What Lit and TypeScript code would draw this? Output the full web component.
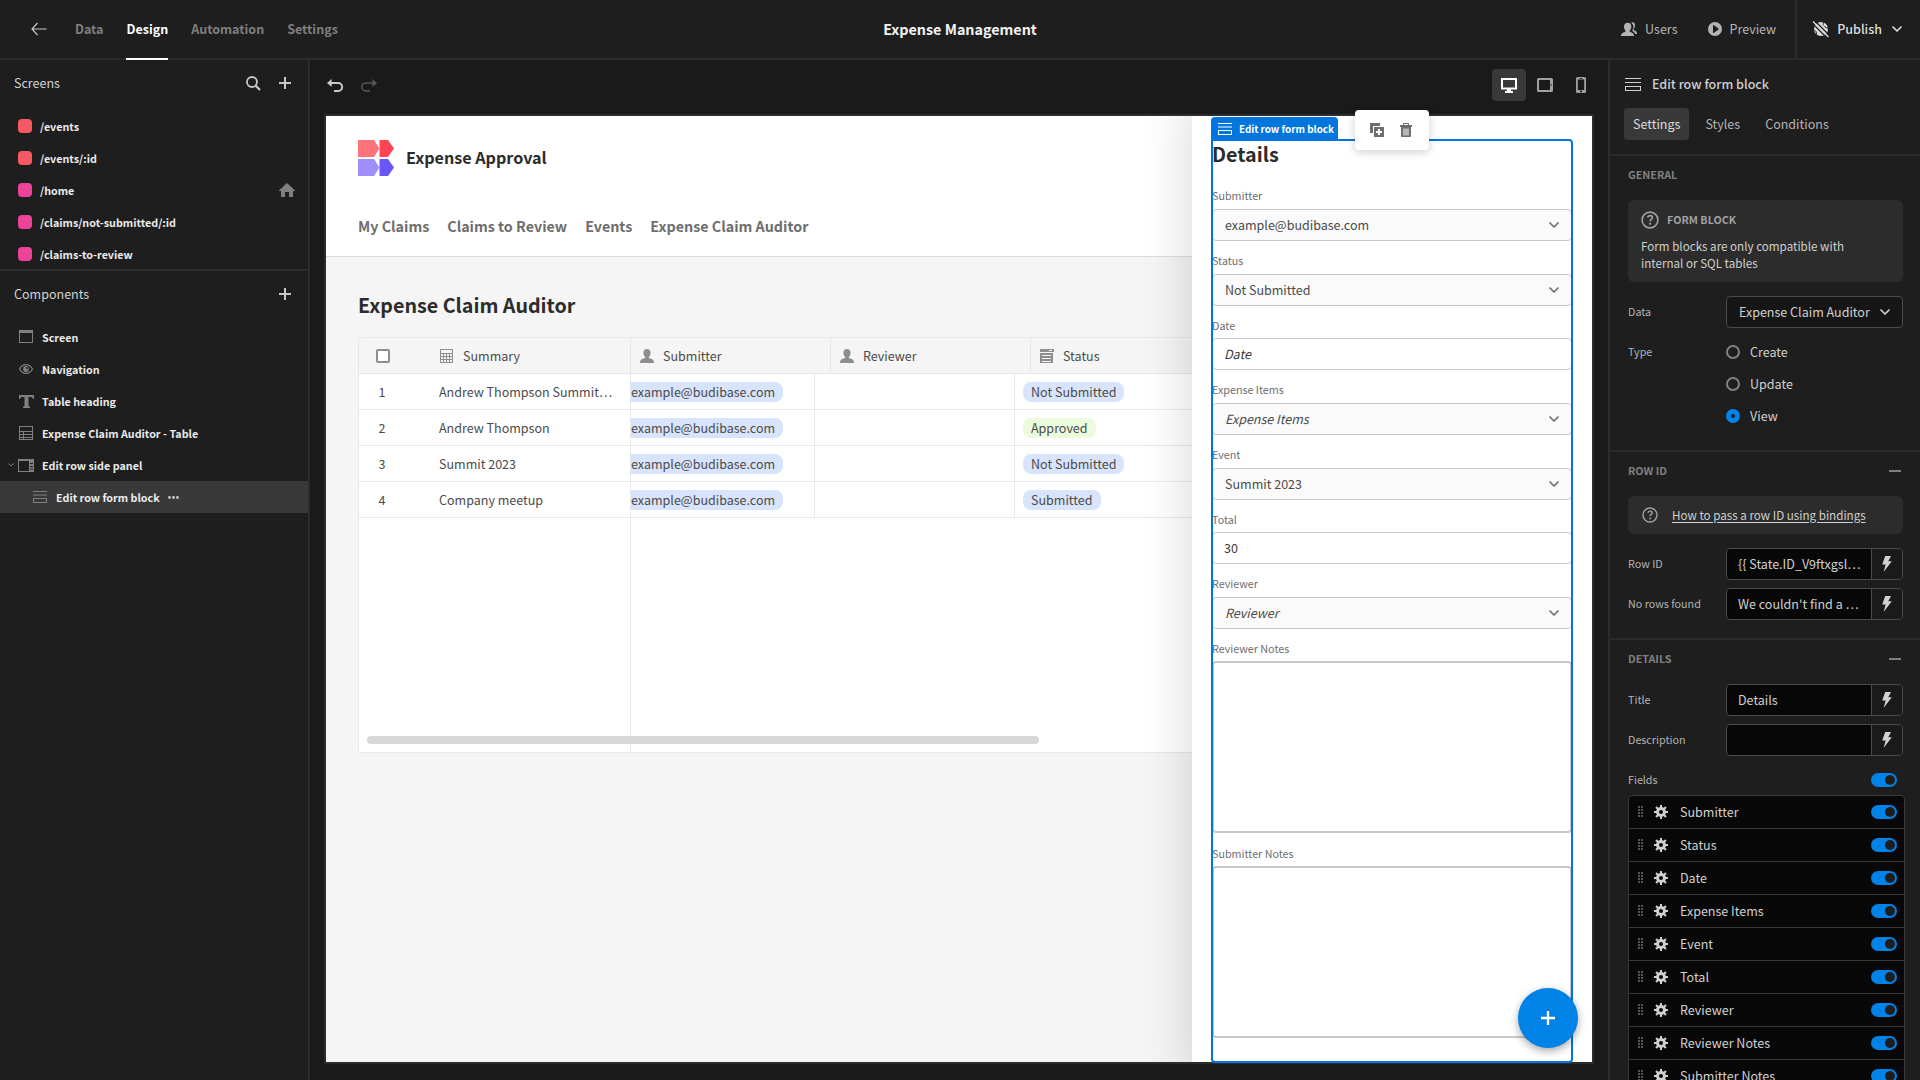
import { LitElement, html, svg, css, nothing, type TemplateResult } from "lit";
import { customElement, property, state } from "lit/decorators.js";
import { classMap } from "lit/directives/class-map.js";

type Icon = { w: number; h: number; body: TemplateResult };

const ICONS: Record<string, Icon> = {
  back: { w: 16, h: 14, body: svg`<path d="M15.500 7H1M6.500 1 1 7l5.500 6" fill="none" stroke="currentColor" stroke-width="1.200"/>` },
  search: { w: 15, h: 15, body: svg`<circle cx="6" cy="6" r="5" fill="none" stroke="currentColor" stroke-width="1.800"/><path d="m9.600 9.600 4.400 4.400" stroke="currentColor" stroke-width="2.200"/>` },
  plus: { w: 12, h: 12, body: svg`<path d="M0 6h12M6 0v12" stroke="currentColor" stroke-width="2"/>` },
  home: { w: 16, h: 14, body: svg`<path d="M8 0 .2 7.300c-.3.300-.1.700.300.700H2v5.500c0 .300.200.500.500.500H6V9h4v5h3.500c.300 0 .5-.2.500-.5V8h1.500c.400 0 .6-.4.300-.7z" fill="currentColor"/>` },
  screen: { w: 14, h: 14, body: svg`<path d="M0 0h14v3H0z" fill="currentColor"/><rect x=".5" y=".5" width="13" height="12" fill="none" stroke="currentColor"/>` },
  eye: { w: 14, h: 10, body: svg`<path d="M.5 5C2 2 4.300.6 7 .6S12 2 13.500 5C12 8 9.700 9.400 7 9.400S2 8 .5 5z" fill="none" stroke="currentColor" stroke-width="1.200"/><circle cx="7" cy="5" r="2.900" fill="currentColor"/><circle cx="8" cy="4" r="1" fill="#1e1e1e"/>` },
  text: { w: 15, h: 13, body: svg`<path d="M0 0h15v4h-1.200c-.2-1.400-.7-2-2-2H9.500v8.500c0 .8.500 1 1.500 1.200V13H4v-1.300c1-.2 1.500-.4 1.500-1.200V2H3.200c-1.300 0-1.800.6-2 2H0z" fill="currentColor"/>` },
  table: { w: 14, h: 14, body: svg`<rect x=".5" y=".5" width="13" height="13" fill="none" stroke="currentColor"/><path d="M0 5.500h14M0 8.500h14M0 11.500h14M4.500 5v9" stroke="currentColor"/>` },
  sidepanel: { w: 16, h: 13, body: svg`<path d="M0 0h16v2H0zM11 0h5v13h-5z" fill="currentColor"/><rect x=".5" y=".5" width="15" height="12" fill="none" stroke="currentColor"/><path d="M12 4.500h3M12 7.500h3M12 10h3" stroke="#1e1e1e"/>` },
  form: { w: 16, h: 13, body: svg`<path d="M0 .5h16M0 4.500h16" stroke="currentColor"/><rect x=".5" y="8.500" width="15" height="4" fill="none" stroke="currentColor"/>` },
  formsmall: { w: 14, h: 12, body: svg`<path d="M0 .5h14M0 4h14" stroke="currentColor"/><rect x=".5" y="7.500" width="13" height="4" fill="none" stroke="currentColor"/>` },
  caret: { w: 6, h: 4, body: svg`<path d="m.5.500 2.500 2.500L5.500.5" fill="none" stroke="currentColor"/>` },
  dots: { w: 11, h: 3, body: svg`<circle cx="1.500" cy="1.500" r="1.400" fill="currentColor"/><circle cx="5.500" cy="1.500" r="1.400" fill="currentColor"/><circle cx="9.500" cy="1.500" r="1.400" fill="currentColor"/>` },
  chevron: { w: 10, h: 6, body: svg`<path d="m1 1 4 4 4-4" fill="none" stroke="currentColor" stroke-width="1.700" stroke-linecap="round" stroke-linejoin="round"/>` },
  undo: { w: 16, h: 13, body: svg`<path d="M4 4h7.200a3.800 3.800 0 0 1 0 7.900H7" fill="none" stroke="currentColor" stroke-width="2"/><path d="M0 4 4.600 0v8z" fill="currentColor"/>` },
  redo: { w: 16, h: 13, body: svg`<path d="M12 4H4.800a3.800 3.800 0 0 0 0 7.900H9" fill="none" stroke="currentColor" stroke-width="1.600"/><path d="m16 4-4.600-4v8z" fill="currentColor"/>` },
  desktop: { w: 16, h: 15, body: svg`<rect x="1" y="1" width="14" height="9.500" fill="none" stroke="currentColor" stroke-width="2"/><path d="M6 11h4v2h1.500c.300 0 .5.200.5.500V15H4v-1.500c0-.3.200-.5.500-.5H6z" fill="currentColor"/>` },
  tablet: { w: 16, h: 14, body: svg`<path d="M1.500 0h13A1.500 1.500 0 0 1 16 1.500v11a1.500 1.500 0 0 1-1.500 1.500h-13A1.500 1.500 0 0 1 0 12.500v-11A1.500 1.500 0 0 1 1.500 0zM2 2v10h11V2zm12.500 4a.8.8 0 0 0 0 2z" fill="currentColor" fill-rule="evenodd"/>` },
  phone: { w: 10, h: 16, body: svg`<path d="M1.500 0h7A1.500 1.500 0 0 1 10 1.500v13A1.500 1.500 0 0 1 8.500 16h-7A1.500 1.500 0 0 1 0 14.500v-13A1.500 1.500 0 0 1 1.500 0zM1.800 2.500v10.500h6.400V2.500zM3.500 1v.7h3V1zm1.500 12.700a.8.8 0 1 0 0 1.500.8.8 0 1 0 0-1.500z" fill="currentColor" fill-rule="evenodd"/>` },
  users: { w: 16, h: 14, body: svg`<path d="M10 1c.5-.6 1-.8 1.600-.8C13.200.2 14 1.500 14 3.300c0 1.500-.5 2.700-1.200 3.500-.3.400-.2 1.200.3 1.400 1.700.6 2.800 1.500 2.900 3.300v.6h-2c-.4-1.600-1.300-2.500-2.900-3.300.9-1.200 1.400-2.600 1.400-4.200C12.500 3 11.500 1.600 10 1z" fill="currentColor"/><path d="M6.800.8c2.200 0 3.500 1.500 3.500 3.800 0 1.600-.6 2.900-1.400 3.800-.4.500-.3 1.300.4 1.500 2 .6 3.500 1.500 3.600 3.400v.7H0v-.7c.1-1.900 1.800-2.800 3.900-3.400.7-.2.800-1 .4-1.500-.8-.9-1.300-2.200-1.300-3.800C3 2.300 4.500.8 6.800.8z" fill="currentColor"/>` },
  play: { w: 14, h: 14, body: svg`<path d="M7 0a7 7 0 1 0 0 14A7 7 0 0 0 7 0zM5 3.300c0-.3.300-.5.600-.3L10.500 6.600c.300.200.3.600 0 .8L5.600 11c-.3.200-.6 0-.6-.3z" fill="currentColor" fill-rule="evenodd"/>` },
  globe: { w: 16, h: 16, body: svg`<circle cx="8" cy="8" r="7" fill="currentColor"/><path d="M10.500 1c-1 1.500.5 2-.5 3.500M1 9.500c2 0 2.500 1.500 2.500 4M15 7c-2 0-3-.5-3.500-2" fill="none" stroke="#1e1e1e"/><path d="M1.500-.5 17 15" stroke="#1e1e1e" stroke-width="1.200"/><path d="M-1.500 1.500 14 17" stroke="#1e1e1e" stroke-width="1.200"/><path d="m0 .5 15.500 15.500" stroke="currentColor" stroke-width="1.400"/>` },
  help: { w: 18, h: 18, body: svg`<circle cx="9" cy="9" r="7.900" fill="none" stroke="currentColor" stroke-width="1.600"/><path d="M6.700 6.600c.2-1.300 1.100-2 2.400-2 1.400 0 2.300.8 2.300 1.900 0 1.900-2.300 1.800-2.300 3.900" fill="none" stroke="currentColor" stroke-width="1.600"/><circle cx="9.100" cy="12.800" r="1.100" fill="currentColor"/>` },
  minus: { w: 12, h: 2, body: svg`<path d="M0 1h12" stroke="currentColor" stroke-width="2"/>` },
  bolt: { w: 10, h: 16, body: svg`<path d="M3.200 0H9L6.300 5.300h3.500L1.600 16l2-7.600H.2z" fill="currentColor"/>` },
  handle: { w: 6, h: 12, body: svg`${[0, 3, 6, 9].map((y) => svg`<path d="M0 ${y}h2v2H0zM3 ${y}h2v2H3z" fill="currentColor"/>`)}` },
  gear: { w: 14, h: 14, body: svg`${[0, 45, 90, 135].map((a) => svg`<path d="M6 0h2v14H6z" fill="currentColor" transform="rotate(${a} 7 7)"/>`)}<circle cx="7" cy="7" r="5" fill="currentColor"/><circle cx="7" cy="7" r="2" fill="#080808"/>` },
  calc: { w: 14, h: 14, body: svg`<path d="M0 0h13v14H0zM1 1v3h11V1zM1 5v2h2V5zm3 0v2h2V5zm3 0v2h2V5zm3 0v2h2V5zM1 8v2h2V8zm3 0v2h2V8zm3 0v2h2V8zm3 0v2h2V8zM1 11v2h2v-2zm3 0v2h2v-2zm3 0v2h2v-2zm3 0v2h2v-2z" fill="currentColor" fill-rule="evenodd"/>` },
  person: { w: 14, h: 14, body: svg`<path d="M7 0c2.200 0 3.600 1.500 3.600 3.800 0 1.700-.6 3.100-1.500 4-.4.500-.3 1.300.4 1.500 2.500.6 4.400 1.600 4.500 3.900v.8H0v-.8c.1-2.300 2-3.300 4.500-3.900.7-.2.800-1 .4-1.500-.9-.9-1.500-2.300-1.500-4C3.400 1.500 4.800 0 7 0z" fill="currentColor"/>` },
  options: { w: 14, h: 14, body: svg`<path d="M0 0h14v3H0zM0 4h13v10H0zM9 1v1h3V1zM2 6v1h9V6zm0 3v1h9V9zm0 3v1h9v-1z" fill="currentColor" fill-rule="evenodd"/>` },
  duplicate: { w: 14, h: 14, body: svg`<path d="M0 0h10v3H3v7H0z" fill="currentColor"/><path d="M4 4h10v10H4zM8 6v2H6v2h2v2h2v-2h2V8h-2V6z" fill="currentColor" fill-rule="evenodd"/>` },
  trash: { w: 12, h: 14, body: svg`<path d="M4 0h4c.6 0 1 .4 1 1v1h3v2H0V2h3V1c0-.6.400-1 1-1zm0 1v1h4V1zM1 4h10v9c0 .6-.4 1-1 1H2c-.6 0-1-.4-1-1zm2.500 1.500v7h1v-7zm2 0v7h1v-7zm2 0v7h1v-7z" fill="currentColor" fill-rule="evenodd"/>` },
};

const icon = (name: string, w?: number, h?: number) => {
  const i = ICONS[name];
  return html`<svg class="icon" width=${w ?? i.w} height=${h ?? i.h} viewBox="0 0 ${i.w} ${i.h}" aria-hidden="true">${i.body}</svg>`;
};

const base = css`
  * { box-sizing: border-box; margin: 0; }
  :host {
    font-family: "Source Sans Pro", "Noto Sans CJK SC", sans-serif;
    font-size-adjust: 0.486;
    font-size: 14px;
    line-height: 20px;
  }
  button, input, select, textarea {
    font: inherit;
    font-size-adjust: inherit;
    color: inherit;
    border: 0;
    padding: 0;
    background: none;
    outline: none;
  }
  button { display: flex; align-items: center; justify-content: center; cursor: pointer; }
  a { color: inherit; text-decoration: none; }
  ul { list-style: none; padding: 0; }
  .icon { display: block; flex: none; overflow: visible; }
  .picker { display: grid; align-items: center; }
  .picker select { grid-area: 1 / 1; appearance: none; width: 100%; height: 32px; padding: 0 34px 0 12px; border-radius: 4px; }
  .picker .icon { grid-area: 1 / 1; justify-self: end; margin-right: 13px; pointer-events: none; }
`;

@customElement("top-bar")
class TopBar extends LitElement {
  static styles = [base, css`
    :host { display: block; }
    .bar { display: grid; grid-template-columns: 1fr auto 1fr; height: 60px; background: #1e1e1e; border-bottom: 2px solid #2c2c2c; color: #c8c8c8; }
    .left { display: flex; align-items: stretch; gap: 23px; padding-left: 31px; }
    .back { width: 21px; justify-content: flex-start; }
    .tab { display: flex; align-items: center; font-weight: 600; color: #7f7f7f; margin-bottom: -2px; border-bottom: 2px solid transparent; }
    .tab.on { color: #fff; border-color: #fff; }
    .title { font-size: 16px; font-weight: 600; color: #f2f2f2; align-self: center; }
    .right { display: flex; justify-content: flex-end; }
    .action { gap: 8px; padding: 0 15px; color: #b4b4b4; }
    .publish { gap: 8px; margin-left: 4px; padding: 0 18px 0 16px; border-left: 2px solid #2c2c2c; font-weight: 500; color: #dcdcdc; }
    .publish .icon:last-child { margin-left: 2px; }
  `];
  render() {
    return html`<header class="bar">
      <nav class="left">
        <button class="back" aria-label="Back">${icon("back")}</button>
        ${["Data", "Design", "Automation", "Settings"].map((t) => html`<a href="#" class=${classMap({ tab: true, on: t === "Design" })}>${t}</a>`)}
      </nav>
      <h1 class="title">Expense Management</h1>
      <div class="right">
        <button class="action">${icon("users")}Users</button>
        <button class="action">${icon("play")}Preview</button>
        <button class="publish">${icon("globe")}Publish${icon("chevron")}</button>
      </div>
    </header>`;
  }
}

@customElement("nav-panel")
class NavPanel extends LitElement {
  static styles = [base, css`
    :host { display: flex; flex-direction: column; background: #1e1e1e; border-right: 2px solid #2c2c2c; color: #c8c8c8; min-height: 0; }
    .screens { height: 211px; overflow: hidden; border-bottom: 2px solid #2c2c2c; flex: none; }
    .head { display: flex; align-items: center; height: 46px; margin-bottom: 4px; padding: 0 17px 0 14px; gap: 18px; }
    .head h2 { font-size: 14px; font-weight: 400; flex: 1; color: #d2d2d2; }
    .row { display: flex; align-items: center; height: 32px; padding: 0 13px 0 8px; font-size: 12px; font-weight: 700; color: #ebebeb; }
    .row a { display: flex; align-items: center; }
    .name { padding-top: 2px; }
    .grow { flex: 1; }
    .slot { width: 10px; color: #808080; }
    .kind { width: 16px; margin-right: 8px; display: grid; place-items: center; color: #808080; }
    .dot { width: 14px; height: 14px; border-radius: 4px; margin-right: 8px; }
    .red { background: #f55a63; }
    .pink { background: #ea4398; }
    .child { padding-left: 22px; background: #393939; }
    .home { color: #808080; }
    .more { margin-left: 8px; color: #c8c8c8; }
  `];
  screens = [
    ["/events", "red"],
    ["/events/:id", "red"],
    ["/home", "pink"],
    ["/claims/not-submitted/:id", "pink"],
    ["/claims-to-review", "pink"],
  ];
  components = [
    ["Screen", "screen"],
    ["Navigation", "eye"],
    ["Table heading", "text"],
    ["Expense Claim Auditor - Table", "table"],
    ["Edit row side panel", "sidepanel"],
    ["Edit row form block", "formsmall"],
  ];
  render() {
    return html`
      <section class="screens">
        <div class="head"><h2>Screens</h2><button aria-label="Search screens">${icon("search")}</button><button aria-label="Add screen">${icon("plus")}</button></div>
        <ul>${this.screens.map(([name, c]) => html`<li class="row">
          <span class="slot"></span>
          <a href="#"><span class="dot ${c}"></span><span class="name">${name}</span></a><span class="grow"></span>
          ${name === "/home" ? html`<span class="home">${icon("home")}</span>` : nothing}
        </li>`)}</ul>
      </section>
      <section>
        <div class="head"><h2>Components</h2><button aria-label="Add component">${icon("plus")}</button></div>
        <ul>${this.components.map(([name, i], n) => html`<li class=${classMap({ row: true, child: n === 5 })}>
          <span class="slot">${n === 4 ? icon("caret") : nothing}</span>
          <a href="#"><span class="kind">${icon(i)}</span><span class="name">${name}</span></a>
          ${n === 5 ? html`<button class="more" aria-label="More">${icon("dots")}</button>` : nothing}
        </li>`)}</ul>
      </section>`;
  }
}

@customElement("claims-grid")
class ClaimsGrid extends LitElement {
  static styles = [base, css`
    :host { display: flex; flex-direction: column; position: relative; height: 416px; background: #fff; border: 1px solid #e8e8e8; border-radius: 4px; overflow: hidden; color: #4b4b4b; }
    table, thead, tbody { display: block; }
    tr { display: flex; height: 36px; border-bottom: 1px solid #e8e8e8; }
    thead tr { background: #f5f5f5; }
    th, td { display: flex; align-items: center; flex: none; width: 200px; padding: 0 8px; border-right: 1px solid #e8e8e8; font-weight: 400; white-space: nowrap; overflow: hidden; }
    th { gap: 9px; padding: 0 9px; }
    th .icon { color: #8e8e8e; }
    .num { width: 72px; border-right: 0; padding: 0; }
    .num span { width: 46px; text-align: center; }
    .box { appearance: none; width: 14px; height: 14px; margin-left: 17px; border: 2px solid #8e8e8e; border-radius: 2px; background: #fff; }
    .mail { width: 184px; padding: 0; }
    .last { flex: 1; border-right: 0; }
    .pill { height: 20px; padding: 0 8px; border-radius: 8px; background: #d8e4fb; }
    .mail .pill { padding-left: 0; border-radius: 0 8px 8px 0; }
    .pill.ok { background: #ebfbdc; }
    .rest { flex: 1; width: 272px; border-right: 1px solid #e8e8e8; }
    .scroll { position: absolute; left: 8px; bottom: 8px; width: 56%; height: 8px; border-radius: 4px; background: #d8d8d8; }
  `];
  rows = [
    ["Andrew Thompson Summit…", "Not Submitted"],
    ["Andrew Thompson", "Approved"],
    ["Summit 2023", "Not Submitted"],
    ["Company meetup", "Submitted"],
  ];
  render() {
    return html`<table>
      <thead><tr>
        <th class="num"><input class="box" type="checkbox" aria-label="Select all rows" /></th>
        <th>${icon("calc")}Summary</th>
        <th>${icon("person")}Submitter</th>
        <th>${icon("person")}Reviewer</th>
        <th class="last">${icon("options")}Status</th>
      </tr></thead>
      <tbody>${this.rows.map(([summary, status], i) => html`<tr>
        <td class="num"><span>${i + 1}</span></td>
        <td>${summary}</td>
        <td class="mail"><span class="pill">example@budibase.com</span></td>
        <td></td>
        <td class="last"><span class=${classMap({ pill: true, ok: status === "Approved" })}>${status}</span></td>
      </tr>`)}</tbody>
    </table>
    <div class="rest"></div>
    <div class="scroll"></div>`;
  }
}

@customElement("row-form")
class RowForm extends LitElement {
  static styles = [base, css`
    :host { display: block; color: #4b4b4b; }
    h2 { font-size: 22px; line-height: 28px; font-weight: 600; color: #2c2c2c; margin-bottom: 16px; }
    .field { margin-bottom: 8px; }
    label { display: block; font-size: 12px; line-height: 24px; color: #6e6e6e; }
    .picker { margin-top: 1px; }
    .picker .icon { color: #6e6e6e; }
    select, .text, .area { display: block; border: 1px solid #c8c8c8; border-radius: 4px; background: #fff; }
    .picker select { background: #fafafa; }
    .text { width: 100%; height: 32px; padding: 0 11px 2px; color: #3c3c3c; }
    .area { width: 100%; height: 172px; margin-bottom: 9px; border-width: 2px; resize: none; }
    .empty, .text::placeholder { font-style: italic; opacity: 1; }
    .text::placeholder { color: #3c3c3c; }
  `];
  render() {
    const fields: [string, string, string][] = [
      ["Submitter", "select", "example@budibase.com"],
      ["Status", "select", "Not Submitted"],
      ["Date", "text", ""],
      ["Expense Items", "select", ""],
      ["Event", "select", "Summit 2023"],
      ["Total", "text", "30"],
      ["Reviewer", "select", ""],
      ["Reviewer Notes", "area", ""],
      ["Submitter Notes", "area", ""],
    ];
    return html`<h2>Details</h2>${fields.map(([label, kind, value], i) => html`<div class="field">
      <label for="f${i}">${label}</label>
      ${kind === "select"
        ? html`<div class="picker"><select id="f${i}" class=${classMap({ empty: !value })}><option>${value || label}</option></select>${icon("chevron")}</div>`
        : kind === "text"
          ? html`<input id="f${i}" class="text" type="text" .value=${value} placeholder=${label} />`
          : html`<textarea id="f${i}" class="area"></textarea>`}
    </div>`)}`;
  }
}

@customElement("design-canvas")
class DesignCanvas extends LitElement {
  @state() device = "desktop";
  static styles = [base, css`
    :host { display: flex; flex-direction: column; background: #1a1a1a; min-width: 0; min-height: 0; }
    .tools { display: flex; align-items: center; height: 54px; flex: none; padding: 0 10px 4px 17px; gap: 18px; color: #c8c8c8; }
    .off { color: #555; }
    .devices { display: flex; gap: 2px; margin-left: auto; }
    .devices button { width: 34px; height: 32px; border-radius: 4px; color: #a0a0a0; }
    .devices .on { background: #393939; color: #fff; }
    .frame { position: relative; flex: 1; min-height: 0; margin: 0 14px 16px; border: 2px solid #2c2c2c; }
    .page { display: flex; flex-direction: column; height: 100%; background: #f5f5f5; overflow: hidden; position: relative; }
    .top { background: #fff; border-bottom: 1px solid #dcdcdc; padding: 24px 32px 18px; }
    .brand { display: flex; align-items: center; gap: 12px; height: 36px; font-size: 18px; font-weight: 600; color: #2c2c2c; }
    .brand span { padding-bottom: 2px; }
    .links { display: flex; gap: 18px; margin-top: 38px; font-size: 16px; line-height: 24px; font-weight: 600; color: #6e6e6e; }
    .main { padding: 32px; }
    .main h1 { font-size: 22px; line-height: 32px; font-weight: 600; color: #2c2c2c; margin-bottom: 16px; }
    .side { position: absolute; inset: 0 0 0 auto; width: 400px; padding: 24px 20px 0; background: #fff; box-shadow: 0 0 40px 10px rgba(0, 0, 0, 0.12); overflow: hidden; }
    .outline { position: absolute; top: 23px; right: 19px; bottom: -1px; width: 362px; border: 2px solid #0076de; border-radius: 4px; border-top-left-radius: 0; pointer-events: none; }
    .tag { position: absolute; top: 1px; right: 254px; display: flex; align-items: center; gap: 7px; width: 127px; height: 22px; padding: 1px 0 0 7px; border-radius: 4px 4px 0 0; background: #0076de; color: #fff; font-size: 11px; font-weight: 600; white-space: nowrap; }
    .float { position: absolute; top: -6px; right: 163px; display: flex; align-items: center; justify-content: center; gap: 16px; width: 74px; height: 40px; padding-right: 2px; border-radius: 4px; background: #fff; color: #6e6e6e; box-shadow: 0 2px 10px rgba(0, 0, 0, 0.2); }
    .fab { position: absolute; right: 14px; bottom: 14px; width: 60px; height: 60px; border-radius: 50%; background: #0082e6; color: #fff; box-shadow: 0 3px 8px rgba(0, 0, 0, 0.35); }
  `];
  render() {
    return html`
      <div class="tools">
        <button aria-label="Undo">${icon("undo")}</button>
        <button class="off" aria-label="Redo">${icon("redo")}</button>
        <div class="devices">${["desktop", "tablet", "phone"].map((d) => html`<button class=${classMap({ on: d === this.device })} aria-label=${d} @click=${() => (this.device = d)}>${icon(d)}</button>`)}</div>
      </div>
      <div class="frame">
        <div class="page">
          <header class="top">
            <div class="brand">
              <svg class="icon" width="36" height="36" viewBox="0 0 36 36" aria-hidden="true">
                <path d="M0 0h16l5.500 8.500L16 17H0z" fill="#ff7279"/><path d="M21.500 0H30l6 8.500-6 8.500h-8.500z" fill="#ff4553"/>
                <path d="M0 19h16l5.500 8.500L16 36H0z" fill="#9e8ffa"/><path d="M21.500 19H30l6 8.500-6 8.500h-8.500z" fill="#6a55f8"/>
              </svg>
              <span>Expense Approval</span>
            </div>
            <nav class="links">${["My Claims", "Claims to Review", "Events", "Expense Claim Auditor"].map((t) => html`<a href="#">${t}</a>`)}</nav>
          </header>
          <main class="main"><h1>Expense Claim Auditor</h1><claims-grid></claims-grid></main>
          <aside class="side"><row-form></row-form></aside>
        </div>
        <div class="outline"></div>
        <div class="tag">${icon("formsmall")}<span>Edit row form block</span></div>
        <div class="float"><button aria-label="Duplicate">${icon("duplicate")}</button><button aria-label="Delete">${icon("trash")}</button></div>
        <button class="fab" aria-label="Add component">${icon("plus", 14, 14)}</button>
      </div>`;
  }
}

@customElement("settings-section")
class SettingsSection extends LitElement {
  @property() heading = "";
  @property({ type: Boolean }) fixed = false;
  static styles = [base, css`
    :host { display: block; border-top: 2px solid #2c2c2c; padding: 0 17px 18px 18px; }
    .head { display: flex; align-items: center; justify-content: space-between; height: 38px; margin-bottom: 6px; padding-right: 2px; color: #808080; }
    h3 { font-size: 12px; font-weight: 600; }
  `];
  render() {
    return html`<div class="head"><h3>${this.heading}</h3>${this.fixed ? nothing : html`<button aria-label="Collapse">${icon("minus")}</button>`}</div><slot></slot>`;
  }
}

@customElement("settings-panel")
class SettingsPanel extends LitElement {
  static styles = [base, css`
    :host { display: block; background: #1e1e1e; border-left: 2px solid #2c2c2c; color: #d0d0d0; overflow: hidden; }
    .title { display: flex; align-items: center; gap: 11px; height: 48px; padding-left: 15px; }
    .title h2 { font-size: 14px; font-weight: 500; }
    .tabs { display: flex; gap: 7px; padding: 0 14px 14px; color: #b4b4b4; }
    .tabs button { height: 32px; padding: 0 9px; border-radius: 4px; }
    .tabs .on { background: #393939; color: #dcdcdc; }
    .info { border-radius: 6px; background: #2c2c2c; padding: 11px 32px 10px 13px; margin-bottom: 14px; font-size: 13px; line-height: 17px; }
    .info h4 { display: flex; align-items: center; gap: 8px; margin: 0 0 9px; font-size: 12px; line-height: 18px; font-weight: 600; color: #a0a0a0; }
    .link { display: flex; align-items: center; gap: 14px; height: 38px; padding: 0 14px; }
    .link a { text-decoration: underline; text-underline-offset: 2px; }
    .link .icon { color: #a0a0a0; }
    .row { display: grid; grid-template-columns: 98px 1fr; margin-bottom: 8px; }
    .row.end { margin-bottom: 0; }
    .label { font-size: 12px; line-height: 32px; color: #b4b4b4; }
    .picker select { border: 1px solid #4b4b4b; background: #161616; padding-right: 26px; }
    .bind { display: grid; grid-template-columns: 1fr 31px; height: 32px; border: 1px solid #4b4b4b; border-radius: 4px; overflow: hidden; background: #080808; }
    .bind input { min-width: 0; padding: 0 8px 0 11px; }
    .bind button { border-left: 1px solid #4b4b4b; background: #1a1a1a; }
    .radio { display: flex; align-items: center; gap: 10px; height: 32px; }
    .radio input { appearance: none; width: 14px; height: 14px; border: 2px solid #808080; border-radius: 50%; }
    .radio input:checked { border: 5px solid #0082e6; }
    .toggle { appearance: none; display: flex; justify-content: flex-end; width: 26px; height: 14px; padding: 2px; border-radius: 7px; background: #0082e6; }
    .toggle::before { content: ""; width: 10px; height: 10px; border-radius: 50%; background: #1e1e1e; }
    .fields { display: flex; align-items: center; justify-content: space-between; height: 31px; padding-right: 6px; }
    .list { border: 1px solid #393939; border-radius: 4px; background: #080808; margin-right: -2px; }
    .list li { display: flex; align-items: center; height: 33px; padding: 0 7px 0 9px; border-bottom: 1px solid #393939; }
    .list .drag { display: flex; color: #555; margin-right: 10px; }
    .list label { flex: 1; margin-left: 12px; }
  `];
  bind(id: string, label: string, value: string, end = false) {
    return html`<div class=${classMap({ row: true, end })}><label class="label" for=${id}>${label}</label>
      <div class="bind"><input id=${id} type="text" .value=${value} /><button aria-label="Bind ${label}">${icon("bolt")}</button></div></div>`;
  }
  render() {
    const fields = ["Submitter", "Status", "Date", "Expense Items", "Event", "Total", "Reviewer", "Reviewer Notes", "Submitter Notes"];
    return html`
      <div class="title">${icon("form")}<h2>Edit row form block</h2></div>
      <div class="tabs"><button class="on">Settings</button><button>Styles</button><button>Conditions</button></div>
      <settings-section heading="GENERAL" fixed>
        <div class="info"><h4>${icon("help")}FORM BLOCK</h4><p>Form blocks are only compatible with internal or SQL tables</p></div>
        <div class="row"><label class="label" for="data">Data</label>
          <div class="picker"><select id="data"><option>Expense Claim Auditor</option></select>${icon("chevron")}</div></div>
        <div class="row end"><span class="label">Type</span>
          <div>${["Create", "Update", "View"].map((t) => html`<label class="radio"><input type="radio" name="type" ?checked=${t === "View"} />${t}</label>`)}</div></div>
      </settings-section>
      <settings-section heading="ROW ID">
        <div class="info link">${icon("help", 16, 16)}<a href="#">How to pass a row ID using bindings</a></div>
        ${this.bind("row-id", "Row ID", "{{ State.ID_V9ftxgsl…")}
        ${this.bind("no-rows", "No rows found", "We couldn't find a …", true)}
      </settings-section>
      <settings-section heading="DETAILS">
        ${this.bind("title", "Title", "Details")}
        ${this.bind("description", "Description", "")}
        <div class="fields"><label class="label" for="all">Fields</label><input id="all" class="toggle" type="checkbox" role="switch" checked /></div>
        <ul class="list">${fields.map((f, i) => html`<li>
          <span class="drag">${icon("handle")}</span><button aria-label="Edit ${f}">${icon("gear")}</button>
          <label for="t${i}">${f}</label><input id="t${i}" class="toggle" type="checkbox" role="switch" checked />
        </li>`)}</ul>
      </settings-section>`;
  }
}

@customElement("app-root")
class AppRoot extends LitElement {
  static styles = css`
    :host { display: grid; grid-template-rows: auto 1fr; height: 100vh; overflow: hidden; background: #1a1a1a; }
    .body { display: grid; grid-template-columns: 310px 1fr 312px; min-height: 0; }
  `;
  render() {
    return html`<top-bar></top-bar><div class="body"><nav-panel></nav-panel><design-canvas></design-canvas><settings-panel></settings-panel></div>`;
  }
}
